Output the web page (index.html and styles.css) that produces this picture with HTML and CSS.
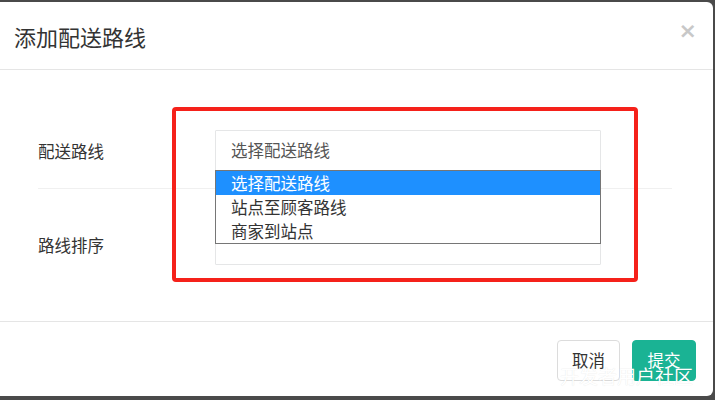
FILE: index.html
```html
<!DOCTYPE html>
<html lang="zh">
<head>
<meta charset="utf-8">
<title>添加配送路线</title>
<link rel="stylesheet" href="styles.css">
</head>
<body>
<div class="modal">
  <div class="modal-header">
    <h4 class="modal-title">添加配送路线</h4>
    <span class="close">×</span>
  </div>
  <div class="modal-body">
    <div class="form-row first">
      <label class="form-label">配送路线</label>
      <div class="control-wrap">
        <div class="form-control">选择配送路线</div>
        <ul class="dropdown">
          <li class="opt selected">选择配送路线</li>
          <li class="opt">站点至顾客路线</li>
          <li class="opt">商家到站点</li>
        </ul>
      </div>
    </div>
    <div class="divider"></div>
    <div class="form-row second">
      <label class="form-label">路线排序</label>
      <div class="control-wrap">
        <div class="form-control"></div>
      </div>
    </div>
    <div class="annotation"></div>
  </div>
  <div class="modal-footer">
    <button class="btn btn-white">取消</button>
    <button class="btn btn-primary">提交</button>
    <span class="watermark">开发者用户社区</span>
  </div>
</div>
</body>
</html>
```
FILE: styles.css
```css
* { box-sizing: border-box; }
html, body { margin: 0; padding: 0; }
body {
  width: 715px;
  height: 400px;
  overflow: hidden;
  background: #4a4a4a;
  font-family: "Noto Sans CJK SC", "Noto Sans", sans-serif;
  color: #333;
}
.modal {
  margin: 2px 0 0 -6px;
  width: 719px;
  height: 394px;
  background: #fff;
  border-radius: 6px;
  display: flex;
  flex-direction: column;
}
.modal-header {
  height: 68px;
  border-bottom: 1px solid #e5e5e5;
  display: flex;
  align-items: center;
  padding: 0 16px 0 20px;
}
.modal-title {
  margin: 0;
  flex: 1;
  font-size: 22px;
  font-weight: normal;
  color: #333;
  line-height: 30px;
  margin-top: 1px;
}
.close {
  font-family: "DejaVu Sans", sans-serif;
  font-weight: bold;
  font-size: 22px;
  color: #c8c8c8;
  line-height: 1;
  margin-top: -10px;
}
.modal-body {
  position: relative;
  height: 252px;
  border-bottom: 1px solid #e5e5e5;
  padding: 60px 0 0 44px;
}
.form-row {
  display: flex;
  align-items: center;
  height: 41px;
}
.form-label {
  width: 177px;
  font-size: 16.5px;
  color: #333;
}
.control-wrap {
  position: relative;
  width: 386px;
}
.form-control {
  height: 41px;
  border: 1px solid #e5e6e7;
  border-radius: 1px;
  padding: 0 15px;
  font-size: 16.5px;
  line-height: 39px;
  color: #555;
}
.dropdown {
  position: absolute;
  left: 0;
  top: 40px;
  width: 386px;
  margin: 0;
  padding: 0;
  list-style: none;
  border: 1px solid #767676;
  background: #fff;
  z-index: 2;
}
.opt {
  height: 24px;
  line-height: 24px;
  padding-left: 15px;
  font-size: 16.5px;
  color: #333;
}
.opt.selected {
  background: #1e90ff;
  color: #fff;
}
.divider {
  margin: 17px 0 35px 0;
  width: 634px;
  border-top: 1px solid #f0f0f0;
}
.annotation {
  position: absolute;
  left: 178px;
  top: 37px;
  width: 466px;
  height: 175px;
  border: 4px solid #f5211a;
  border-radius: 4px;
  pointer-events: none;
}
.modal-footer {
  position: relative;
  display: flex;
  justify-content: flex-end;
  align-items: flex-start;
  gap: 12px;
  padding: 18px 17px 0 0;
}
.btn {
  height: 41px;
  border-radius: 4px;
  font-family: "Noto Sans CJK SC", sans-serif;
  font-size: 16.5px;
  padding: 0 14px;
  line-height: 39px;
}
.btn-white {
  width: 63px;
  background: #fff;
  border: 1px solid #dcdcdc;
  color: #333;
}
.btn-primary {
  width: 64px;
  background: #1ab394;
  border: 1px solid #1ab394;
  color: #fff;
}
.watermark {
  position: absolute;
  right: 20px;
  top: 40px;
  font-size: 19px;
  color: #fff;
  text-shadow: 0 0 1px rgba(0,0,0,0.12);
  pointer-events: none;
}
```
